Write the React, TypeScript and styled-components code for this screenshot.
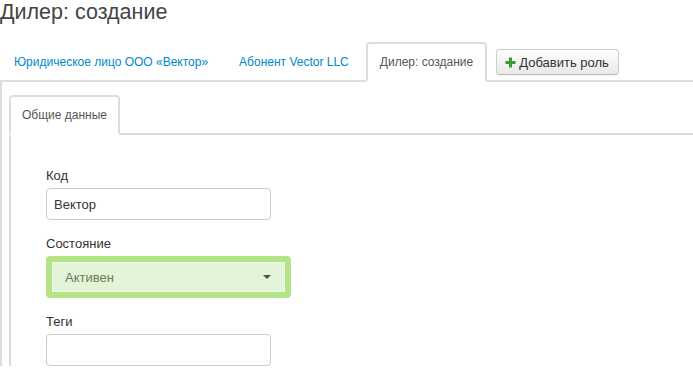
import React from 'react';
import styled, { createGlobalStyle } from 'styled-components';

const GlobalStyle = createGlobalStyle`
  html, body {
    margin: 0;
    padding: 0;
    background: #fff;
    overflow: hidden;
  }
  body {
    font-family: 'Liberation Sans', Arial, Helvetica, sans-serif;
    color: #333;
  }
`;

const outerTabs = ['Юридическое лицо ООО «Вектор»', 'Абонент Vector LLC', 'Дилер: создание'];

const App: React.FC = () => {
  return (
    <>
      <GlobalStyle />
      <Page>
        <Title>Дилер: создание</Title>

        <TabBar $gap={18}>
          {outerTabs.map((label, index) => (
            <Tab key={label} $active={index === 2} $link={index !== 2} $padX={12}>
              {label}
            </Tab>
          ))}
          <AddButton type="button">
            <PlusIcon width="11" height="11" viewBox="0 0 11 11">
              <path d="M5.5 0.5v10M0.5 5.5h10" stroke="#3d9a36" strokeWidth="3" />
            </PlusIcon>
            Добавить роль
          </AddButton>
        </TabBar>

        <OuterPanel>
          <TabBar $gap={0}>
            <Tab $active $link={false} $padX={11}>Общие данные</Tab>
          </TabBar>

          <InnerPanel>
            <FieldGroup>
              <Label>Код</Label>
              <TextInput defaultValue="Вектор" />
            </FieldGroup>

            <FieldGroup>
              <Label>Состояние</Label>
              <SelectRing>
                <SelectBox>
                  <span>Активен</span>
                  <Caret />
                </SelectBox>
              </SelectRing>
            </FieldGroup>

            <FieldGroup>
              <Label>Теги</Label>
              <TextInput defaultValue="" />
            </FieldGroup>
          </InnerPanel>
        </OuterPanel>
      </Page>
    </>
  );
};

const Page = styled.div`
  width: 100%;
`;

const Title = styled.h1`
  margin: 0;
  font-size: 21.5px;
  line-height: 24px;
  font-weight: normal;
  color: #444;
`;

const TabBar = styled.div<{ $gap: number }>`
  display: flex;
  align-items: flex-end;
  margin-top: ${props => props.$gap}px;
  border-bottom: 2px solid #ddd;
`;

const Tab = styled.div<{ $active: boolean; $link: boolean; $padX: number }>`
  margin-bottom: -2px;
  padding: ${props => (props.$active ? `10px ${props.$padX}px` : '10px 15px 10px 12px')};
  border: 2px solid ${props => (props.$active ? '#ddd' : 'transparent')};
  border-bottom-color: ${props => (props.$active ? '#fff' : 'transparent')};
  border-radius: 4px 4px 0 0;
  background: ${props => (props.$active ? '#fff' : 'transparent')};
  font-size: 12px;
  line-height: 16px;
  color: ${props => (props.$link ? '#0088cc' : '#555')};
  white-space: nowrap;
  cursor: pointer;
`;

const AddButton = styled.button`
  display: flex;
  align-items: center;
  gap: 3px;
  height: 26px;
  margin: 0 0 5px 9px;
  padding: 0 9px 0 8px;
  border: 1px solid #ccc;
  border-bottom-color: #b8b8b8;
  border-radius: 4px;
  background: linear-gradient(to bottom, #ffffff, #e8e8e8);
  box-shadow: inset 0 1px 0 rgba(255, 255, 255, 0.2), 0 1px 2px rgba(0, 0, 0, 0.05);
  font-family: inherit;
  font-size: 13px;
  color: #333;
  cursor: pointer;
`;

const PlusIcon = styled.svg`
  display: block;
  flex-shrink: 0;
`;

const OuterPanel = styled.div`
  border-left: 2px solid #ddd;
  padding: 13px 0 0 7px;
`;

const InnerPanel = styled.div`
  border-left: 2px solid #ddd;
  padding: 32px 0 0 35px;
`;

const FieldGroup = styled.div`
  margin-bottom: 15px;
`;

const Label = styled.label`
  display: block;
  margin-bottom: 3px;
  font-size: 13px;
  line-height: 18px;
  color: #333;
`;

const TextInput = styled.input`
  display: block;
  box-sizing: border-box;
  width: 225px;
  height: 32px;
  padding: 0 7px;
  border: 1px solid #ccc;
  border-radius: 4px;
  font-family: inherit;
  font-size: 13px;
  color: #333;
  outline: none;
`;

const SelectRing = styled.div`
  box-sizing: border-box;
  width: 245px;
  height: 42px;
  border: 6px solid #b4e287;
  border-radius: 4px;
`;

const SelectBox = styled.div`
  box-sizing: border-box;
  display: flex;
  align-items: center;
  justify-content: space-between;
  height: 100%;
  padding: 0 13px 0 12px;
  border: 1px solid #eef8e6;
  border-radius: 2px;
  background: #e4f4d8;
  font-size: 13px;
  color: #62805a;
`;

const Caret = styled.span`
  width: 0;
  height: 0;
  border-left: 4px solid transparent;
  border-right: 4px solid transparent;
  border-top: 4px solid #3f5a33;
`;

export default App;
